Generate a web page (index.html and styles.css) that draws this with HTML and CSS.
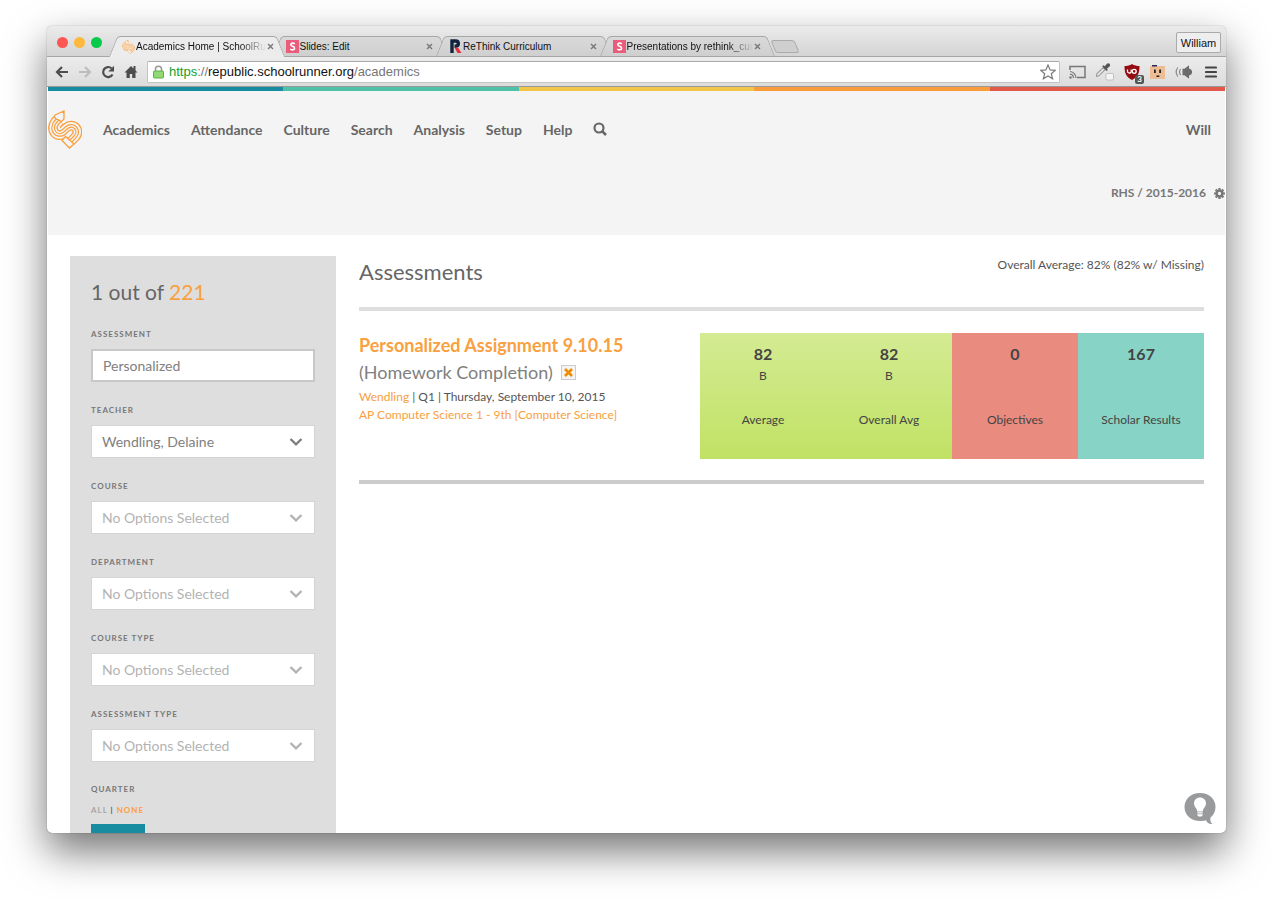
FILE: index.html
```html
<!DOCTYPE html>
<html lang="en">
<head>
	<meta charset="UTF-8">
	<title>Academics Home | SchoolRunner</title>
	<link rel="stylesheet" href="styles.css">
</head>
<body>
	<!-- shared shapes -->
	<svg class="defs" aria-hidden="true">
		<symbol id="logo" viewBox="0 0 34 39">
			<g fill="none">
				<path d="M11 10L9 12C3 19 9 27 16 22L19 19C25 14 31 21 26 26L22 30" stroke="#f9a040" stroke-width="13"/>
				<path d="M11 10L9 12C3 19 9 27 16 22L19 19C25 14 31 21 26 26L22 30" stroke="#f4f4f4" stroke-width="10.4"/>
				<path d="M11 10L9 12C3 19 9 27 16 22L19 19C25 14 31 21 26 26L22 30" stroke="#f9a040" stroke-width="6.6"/>
				<path d="M11 10L9 12C3 19 9 27 16 22L19 19C25 14 31 21 26 26L22 30" stroke="#f4f4f4" stroke-width="4"/>
				<path d="M11 10L9 12C3 19 9 27 16 22L19 19C25 14 31 21 26 26L22 30" stroke="#f9a040" stroke-width="1.2"/>
			</g>
			<path d="M7 5L16 1L16 9L13 12C12 9 9 10 8 9C8 7 5 8 7 5Z" fill="#f4f4f4" stroke="#f9a040" stroke-width="1.3"/>
			<path d="M13 2L16 1L16 4Z" fill="#f9a040"/>
			<path d="M17.500 26.500L26 34L21.500 38L14 30.500Z" fill="#f4f4f4" stroke="#f9a040" stroke-width="1.3"/>
		</symbol>
		<symbol id="chevron" viewBox="0 0 14 10">
			<path d="M1.500 2L7 7.300L12.500 2" fill="none" stroke="currentColor" stroke-width="2.400"/>
		</symbol>
		<symbol id="slides" viewBox="0 0 13 13">
			<rect width="13" height="13" fill="#e95c7c"/>
			<path d="M8.800 3.800C7.500 2.800 4.800 2.800 4.800 4.700C4.800 6.700 8.600 6 8.600 8.200C8.600 10.200 5.600 10.200 4.200 9.200" fill="none" stroke="#fff" stroke-width="1.600"/>
		</symbol>
	</svg>

	<div class="window">
		<div class="tabstrip">
			<div class="lights"><i class="red"></i><i class="amber"></i><i class="green"></i></div>
			<div class="tabs">
				<div class="tab active">
					<svg width="13" height="14"><use href="#logo"/></svg>
					<span class="name fade">Academics Home | SchoolRu</span>
					<button type="button" aria-label="Close tab"><svg width="7" height="7" viewBox="0 0 7 7"><path d="M1 1L6 6M6 1L1 6"/></svg></button>
				</div>
				<div class="tab">
					<svg width="13" height="13"><use href="#slides"/></svg>
					<span class="name">Slides: Edit</span>
					<button type="button" aria-label="Close tab"><svg width="7" height="7" viewBox="0 0 7 7"><path d="M1 1L6 6M6 1L1 6"/></svg></button>
				</div>
				<div class="tab">
					<svg width="13" height="14" viewBox="0 0 12 14">
						<path d="M2.500 14V2H6C9.800 2 9.800 7.200 6 7.200H5" fill="none" stroke="#12233f" class="thick"/>
						<path d="M5 8.500H8.500L12 14H8Z" fill="#e5303a"/>
					</svg>
					<span class="name">ReThink Curriculum</span>
					<button type="button" aria-label="Close tab"><svg width="7" height="7" viewBox="0 0 7 7"><path d="M1 1L6 6M6 1L1 6"/></svg></button>
				</div>
				<div class="tab">
					<svg width="13" height="13"><use href="#slides"/></svg>
					<span class="name fade">Presentations by rethink_cur</span>
					<button type="button" aria-label="Close tab"><svg width="7" height="7" viewBox="0 0 7 7"><path d="M1 1L6 6M6 1L1 6"/></svg></button>
				</div>
			</div>
			<button type="button" class="newtab" aria-label="New tab"></button>
			<button type="button" class="profile">William</button>
		</div>

		<div class="toolbar">
			<button type="button" aria-label="Back"><svg width="14" height="12" viewBox="0 0 14 12"><path d="M7 1L2 6L7 11M2 6H13" fill="none" stroke="#4d4d4d" stroke-width="2.200"/></svg></button>
			<button type="button" aria-label="Forward"><svg width="14" height="12" viewBox="0 0 14 12"><path d="M7 1L12 6L7 11M12 6H1" fill="none" stroke="#bdbdbd" stroke-width="2.200"/></svg></button>
			<button type="button" aria-label="Reload"><svg width="14" height="14" viewBox="0 0 14 14"><path d="M11.500 9.500A5 5 0 1 1 10.500 3.300" fill="none" stroke="#4d4d4d" stroke-width="2.200"/><path d="M13 .8V6.500H7.300Z" fill="#4d4d4d"/></svg></button>
			<button type="button" aria-label="Home"><svg width="14" height="14" viewBox="0 0 14 14"><path d="M7 1L0.500 7.500H2.500V13H5.800V9H8.200V13H11.500V7.500H13.500L11.500 5.500V1H9.500V3.500Z" fill="#4d4d4d"/></svg></button>
			<div class="address">
				<svg width="11" height="14" viewBox="0 0 11 14">
					<path d="M2.500 7V4C2.500 .3 8.500 .3 8.500 4V7" fill="none" stroke="#999" stroke-width="1.600"/>
					<rect x=".5" y="6" width="10" height="7" rx="1" fill="#93d973" stroke="#5fae48"/>
				</svg>
				<a href="#"><span class="https">https</span>://<b>republic.schoolrunner.org</b>/academics</a>
				<svg width="16" height="16" viewBox="0 0 16 16"><path d="M8 1L10.100 5.900L15.300 6.300L11.300 9.700L12.600 14.800L8 12L3.400 14.800L4.700 9.700L.7 6.300L5.900 5.900Z" fill="#fff" stroke="#7d7d7d" stroke-width="1.200"/></svg>
			</div>
			<div class="extensions">
				<svg width="17" height="14" viewBox="0 0 17 14"><g fill="none" stroke="#777" stroke-width="1.500"><path d="M1 5V1.500H16V12.500H8"/><path d="M1 6.500A6.500 6.500 0 0 1 7 13M1 9.200A4 4 0 0 1 4.500 13" stroke-width="1.200"/></g><circle cx="1.500" cy="12.500" r="1.200" fill="#777"/></svg>
				<svg width="18" height="20" viewBox="1 0 19 20"><path d="M1.500 14.500L2 12L8.500 5.500L10.500 7.500L4 14Z" fill="#eee" stroke="#999" stroke-width="1.200"/><path d="M7.500 4L9 2.800L10.300 4L12.500 1.200C14.500 -.5 17 2 15.500 4L12.500 6.500L13.500 7.800L12.200 9Z" fill="#555"/><rect x="11.500" y="11.500" width="8" height="7" rx="1.500" fill="#f5f5f5" stroke="#bbb"/></svg>
				<span class="shield">
					<svg width="16" height="16" viewBox="0 0 16 16"><path d="M8 0C10 1.500 13 2 15.500 2C15.500 9 14 13 8 16C2 13 .5 9 .5 2C3 2 6 1.500 8 0Z" fill="#950b12"/><path d="M3.500 5.500V7.500C3.500 9.500 7.200 9.500 7.200 7.500V5.500" fill="none" stroke="#fff" stroke-width="1.300"/><circle cx="10.200" cy="7.300" r="2" fill="none" stroke="#fff" stroke-width="1.300"/></svg>
					<b>3</b>
				</span>
				<svg width="15" height="16" viewBox="0 0 15 16"><rect y="2" width="15" height="13" fill="#eebd94"/><path d="M2 1H7V2.500H2Z" fill="#26285a"/><path d="M4 5.500H5.800V9H4ZM9.200 5.500H11V9H9.200ZM6.500 11.500H9.300V13H6.500Z" fill="#222"/></svg>
				<svg width="18" height="14" viewBox="0 0 18 14"><path d="M7.500 3.800H9.500L14 .3V13.700L9.500 10.200H7.500Z" fill="#6b6b6b"/><path d="M14 3.500C18.200 4.500 18.200 9.500 14 10.500Z" fill="#6b6b6b"/><path d="M5.500 4Q3.500 7 5.500 10M2.800 2.500Q-.5 7 2.800 11.500" fill="none" stroke="#888" stroke-width="1.200"/></svg>
				<button type="button" class="menu" aria-label="Menu"><svg width="12" height="12" viewBox="0 0 12 12"><path d="M1 1.500H11M1 6H11M1 10.500H11" stroke="#444" stroke-width="2.200" stroke-linecap="round"/></svg></button>
			</div>
		</div>

		<div class="page">
			<div class="stripe"><i></i><i></i><i></i><i></i><i></i></div>
			<header>
				<nav>
					<a href="#" class="logo" aria-label="Schoolrunner"><svg width="34" height="39"><use href="#logo"/></svg></a>
					<a href="#">Academics</a>
					<a href="#">Attendance</a>
					<a href="#">Culture</a>
					<a href="#">Search</a>
					<a href="#">Analysis</a>
					<a href="#">Setup</a>
					<a href="#">Help</a>
					<a href="#" aria-label="Find"><svg width="14" height="14" viewBox="0 0 14 14"><circle cx="6" cy="6" r="4.500" fill="none" stroke="#666" stroke-width="2.200"/><path d="M9.300 9.300L13 13" stroke="#666" stroke-width="2.600"/></svg></a>
					<a href="#" class="user">Will</a>
				</nav>
				<div class="school">
					<span>RHS / 2015-2016</span>
					<svg width="11" height="11" viewBox="0 0 12 12"><circle cx="6" cy="6" r="3.200" fill="none" stroke="#777" stroke-width="2.800"/><path d="M6 0V2M6 10V12M0 6H2M10 6H12M1.800 1.800L3 3M9 9L10.200 10.200M10.200 1.800L9 3M3 9L1.800 10.200" stroke="#777" stroke-width="2.400"/></svg>
				</div>
			</header>

			<div class="content">
				<aside>
					<h2>1 out of <a href="#">221</a></h2>
					<form action="#">
						<div class="field">
							<label for="assessment">ASSESSMENT</label>
							<input type="text" id="assessment" value="Personalized">
						</div>
						<div class="field">
							<label for="teacher">TEACHER</label>
							<div class="select chosen"><select id="teacher"><option>Wendling, Delaine</option></select><svg width="14" height="10"><use href="#chevron"/></svg></div>
						</div>
						<div class="field">
							<label for="course">COURSE</label>
							<div class="select"><select id="course"><option>No Options Selected</option></select><svg width="14" height="10"><use href="#chevron"/></svg></div>
						</div>
						<div class="field">
							<label for="department">DEPARTMENT</label>
							<div class="select"><select id="department"><option>No Options Selected</option></select><svg width="14" height="10"><use href="#chevron"/></svg></div>
						</div>
						<div class="field">
							<label for="ctype">COURSE TYPE</label>
							<div class="select"><select id="ctype"><option>No Options Selected</option></select><svg width="14" height="10"><use href="#chevron"/></svg></div>
						</div>
						<div class="field">
							<label for="atype">ASSESSMENT TYPE</label>
							<div class="select"><select id="atype"><option>No Options Selected</option></select><svg width="14" height="10"><use href="#chevron"/></svg></div>
						</div>
						<div class="quarter">
							<p class="caption">QUARTER</p>
							<p class="toggle"><a href="#" class="all">ALL</a> | <a href="#">NONE</a></p>
							<button type="button" class="q" aria-label="Quarter 1"></button>
						</div>
					</form>
				</aside>

				<main>
					<div class="heading">
						<h1>Assessments</h1>
						<p>Overall Average: 82% (82% w/ Missing)</p>
					</div>
					<div class="item">
						<div class="info">
							<h3><a href="#">Personalized Assignment 9.10.15</a></h3>
							<p class="kind">(Homework Completion) <button type="button" aria-label="Remove"><svg width="9" height="9" viewBox="0 0 9 9"><path d="M1 1L8 8M8 1L1 8" stroke="#f08c00" stroke-width="2.600"/></svg></button></p>
							<p><a href="#">Wendling</a> | Q1 | Thursday, September 10, 2015</p>
							<p><a href="#">AP Computer Science 1 - 9th [Computer Science]</a></p>
						</div>
						<div class="tiles">
							<div class="tile lime"><b>82</b><span>B</span><em>Average</em></div>
							<div class="tile lime"><b>82</b><span>B</span><em>Overall Avg</em></div>
							<div class="tile coral"><b>0</b><span></span><em>Objectives</em></div>
							<div class="tile teal"><b>167</b><span></span><em>Scholar Results</em></div>
						</div>
					</div>
				</main>
			</div>
		</div>

		<button type="button" class="help" aria-label="Ideas">
			<svg width="32" height="33" viewBox="0 0 32 33">
				<path d="M16 1C7 1 .5 7 .5 15S7 29 16 29C18 29 20 29 22 28.300C23 31 25.500 32.500 28.500 32C26.500 30.500 26 28.500 26.500 25.500C29.500 23 31.500 19.500 31.500 15C31.500 7 25 1 16 1Z" fill="#989a9b"/>
				<path d="M16 5.500C12.500 5.500 10 8 10 11.500C10 15 13.300 16.500 13.300 19.500H18.700C18.700 16.500 22 15 22 11.500C22 8 19.500 5.500 16 5.500ZM13.300 20.300H18.700V21.500H13.300ZM13.300 22.200H18.700V23.300L17.500 24.500H14.500L13.300 23.300Z" fill="#fff"/>
			</svg>
		</button>
	</div>
</body>
</html>
```
FILE: styles.css
```css
*{
	box-sizing: border-box;
}
body, h1, h2, h3, p{
	margin: 0;
	padding: 0;
}
body{
	height: 100vh;
	padding: 26px 47px 67px;
	background: #fff;
	font-family: Lato, "Liberation Sans", sans-serif;
	font-size: 12px;
	color: #555;
	overflow: hidden;
}
a{
	color: #f9a040;
	text-decoration: none;
}
button{
	margin: 0;
	padding: 0;
	border: none;
	background: none;
	font: inherit;
	color: inherit;
}
svg{
	display: block;
	flex: none;
}
.defs{
	position: absolute;
	width: 0;
	height: 0;
}

/* browser window */
.window{
	position: relative;
	display: flex;
	flex-direction: column;
	height: 100%;
	border-radius: 5px;
	overflow: hidden;
	background: #fff;
	box-shadow: 0 0 1px rgba(0,0,0,.6), 0 18px 40px rgba(0,0,0,.55);
}
.tabstrip{
	display: flex;
	align-items: flex-end;
	flex: none;
	height: 31px;
	padding: 0 5px 0 10px;
	background: linear-gradient(#ebebeb, #d4d4d4);
	border-bottom: 1px solid #a6a6a6;
	font-family: "Liberation Sans", Arial, sans-serif;
	font-size: 10px;
	color: #111;
}
.lights{
	display: flex;
	gap: 6px;
	margin-right: 11px;
	padding-bottom: 8px;
}
.lights i{
	width: 11px;
	height: 11px;
	border-radius: 50%;
}
.red{
	background: #fd5754;
}
.amber{
	background: #fdb93d;
}
.green{
	background: #09c94b;
}
.tabs{
	display: flex;
	flex: 0 1 658px;
	min-width: 0;
}
.tab{
	position: relative;
	display: flex;
	align-items: center;
	gap: 1px;
	flex: 1 1 0;
	min-width: 0;
	height: 20px;
	padding: 0 11px 0 9px;
	margin-left: -4px;
}
.tab:first-child{
	margin-left: 0;
}
/* each half of a tab leans its own way */
.tab::before, .tab::after{
	content: "";
	position: absolute;
	top: 0;
	bottom: 0;
	width: 56%;
	background: linear-gradient(#dadada, #cfcfcf);
	border-top: 1px solid #a6a6a6;
}
.tab::before{
	left: 0;
	border-left: 1px solid #a6a6a6;
	border-top-left-radius: 4px;
	transform: skewX(-22deg);
}
.tab::after{
	right: 0;
	border-right: 1px solid #a6a6a6;
	border-top-right-radius: 4px;
	transform: skewX(22deg);
}
.tab.active{
	z-index: 2;
	height: 21px;
	margin-bottom: -1px;
}
.tab.active::before, .tab.active::after{
	background: #ececec;
}
.tab > *{
	position: relative;
	z-index: 1;
}
.tab .name{
	flex: 1;
	white-space: nowrap;
}
.tab .fade{
	-webkit-mask-image: linear-gradient(90deg, #000 80%, transparent);
	mask-image: linear-gradient(90deg, #000 80%, transparent);
}
.tab .thick{
	stroke-width: 3.4px;
}
.tab button path{
	stroke: #777;
	stroke-width: 1.4px;
}
.newtab{
	flex: none;
	width: 24px;
	height: 13px;
	margin: 0 0 3px 2px;
	background: #cfcfcf;
	border: 1px solid #aaa;
	border-radius: 3px;
	transform: skewX(22deg);
}
.profile{
	width: 45px;
	height: 21px;
	margin: 0 0 3px auto;
	border: 1px solid #aaa;
	border-radius: 2px;
	background: #eee;
	font-size: 11px;
}
.toolbar{
	display: flex;
	align-items: center;
	gap: 9px;
	flex: none;
	height: 30px;
	padding: 0 9px 0 8px;
	background: linear-gradient(#ececec, #dcdcdc);
	border-bottom: 1px solid #999;
}
.address{
	display: flex;
	align-items: center;
	gap: 5px;
	flex: 1;
	height: 22px;
	padding: 0 3px 0 5px;
	background: #fff;
	border: 1px solid #c4c4c4;
	border-top-color: #aaa;
	border-radius: 2px;
	font-family: "Liberation Sans", Arial, sans-serif;
	font-size: 13px;
}
.address a{
	flex: 1;
	color: #777;
}
.address b{
	font-weight: normal;
	color: #111;
}
.address .https{
	color: #12a02c;
}
.extensions{
	display: flex;
	align-items: center;
	gap: 10px;
}
.menu{
	margin-left: 2px;
}
.shield{
	position: relative;
}
.shield b{
	position: absolute;
	right: -4px;
	bottom: -4px;
	width: 9px;
	border-radius: 2px;
	background: #555;
	color: #fff;
	font-size: 8px;
	line-height: 9px;
	text-align: center;
}

/* site header */
.page{
	flex: 1;
	min-height: 0;
	margin: 0 1px;
	overflow: hidden;
}
.stripe{
	display: flex;
	height: 4px;
}
.stripe i{
	flex: 1;
	background: #178ba0;
}
.stripe i:nth-child(2){
	background: #4fc1a9;
}
.stripe i:nth-child(3){
	background: #f0c548;
}
.stripe i:nth-child(4){
	background: #fb9c3c;
}
.stripe i:nth-child(5){
	background: #e2594a;
}
header{
	height: 144px;
	padding-top: 18px;
	background: #f4f4f4;
}
nav{
	display: flex;
	align-items: center;
	gap: 21px;
	height: 40px;
	padding-right: 14px;
	font-size: 14px;
	font-weight: bold;
}
nav a{
	color: #666;
}
nav .user{
	margin-left: auto;
}
.school{
	display: flex;
	align-items: center;
	justify-content: flex-end;
	gap: 8px;
	margin-top: 36px;
	font-weight: bold;
	line-height: 16px;
	color: #777;
}

/* filters */
.content{
	display: flex;
	gap: 23px;
	padding: 21px 21px 0 22px;
}
aside{
	flex: none;
	width: 266px;
	height: 800px;
	padding: 20px 21px;
	background: #dedede;
}
h1, h2{
	font-size: 21px;
	font-weight: normal;
	line-height: 32px;
	color: #666;
}
h1{
	font-size: 22px;
}
.field{
	height: 76px;
	padding-top: 18px;
}
label, .caption{
	display: block;
	font-size: 8px;
	font-weight: bold;
	line-height: 16px;
	letter-spacing: 1px;
	color: #777;
}
.field label{
	margin-bottom: 7px;
}
.field input, .field select{
	display: block;
	width: 100%;
	height: 33px;
	padding: 0 10px;
	border: 1px solid #d4d4d4;
	border-radius: 0;
	background: #fff;
	font: 14px Lato, "Liberation Sans", sans-serif;
	color: #b3b3b3;
	-webkit-appearance: none;
	appearance: none;
}
.field input{
	border: 2px solid #c8c8c8;
	color: #808080;
}
.select{
	position: relative;
	color: #b3b3b3;
}
.select svg{
	position: absolute;
	right: 12px;
	top: 12px;
}
.chosen, .chosen select{
	color: #808080;
}
.quarter{
	padding-top: 17px;
}
.toggle{
	margin: 6px 0 7px;
	font-size: 8px;
	font-weight: bold;
	line-height: 14px;
	letter-spacing: 1px;
}
.toggle .all{
	color: #a6a6a6;
}
.q{
	display: block;
	width: 54px;
	height: 30px;
	background: #178ba0;
}

/* list */
main{
	flex: 1;
	min-width: 0;
}
.heading{
	display: flex;
	justify-content: space-between;
	height: 55px;
	border-bottom: 4px solid #dedede;
}
.heading p{
	line-height: 18px;
}
.item{
	display: flex;
	justify-content: space-between;
	padding: 22px 0 21px;
	border-bottom: 4px solid #ccc;
}
.info{
	line-height: 18px;
}
h3{
	font-size: 18px;
	line-height: 24px;
}
.kind{
	display: flex;
	align-items: center;
	gap: 8px;
	margin: 2px 0 3px;
	font-size: 18px;
	line-height: 26px;
	color: #808080;
}
.kind button{
	display: flex;
	align-items: center;
	justify-content: center;
	width: 15px;
	height: 15px;
	background: #f4f4f4;
	border: 1px solid #ccc;
}
.tiles{
	display: flex;
	flex: none;
}
.tile{
	display: flex;
	flex-direction: column;
	width: 126px;
	height: 126px;
	padding-top: 11px;
	text-align: center;
	color: #444;
}
.tile b{
	font-size: 16px;
	line-height: 20px;
}
.tile span{
	height: 24px;
	line-height: 24px;
}
.tile em{
	margin-top: 22px;
	font-style: normal;
	line-height: 20px;
}
.lime{
	background: linear-gradient(#d4eb93, #c0e264);
}
.coral{
	background: #e98b7f;
}
.teal{
	background: #87d3c6;
}
.help{
	position: absolute;
	right: 10px;
	bottom: 8px;
}
```
